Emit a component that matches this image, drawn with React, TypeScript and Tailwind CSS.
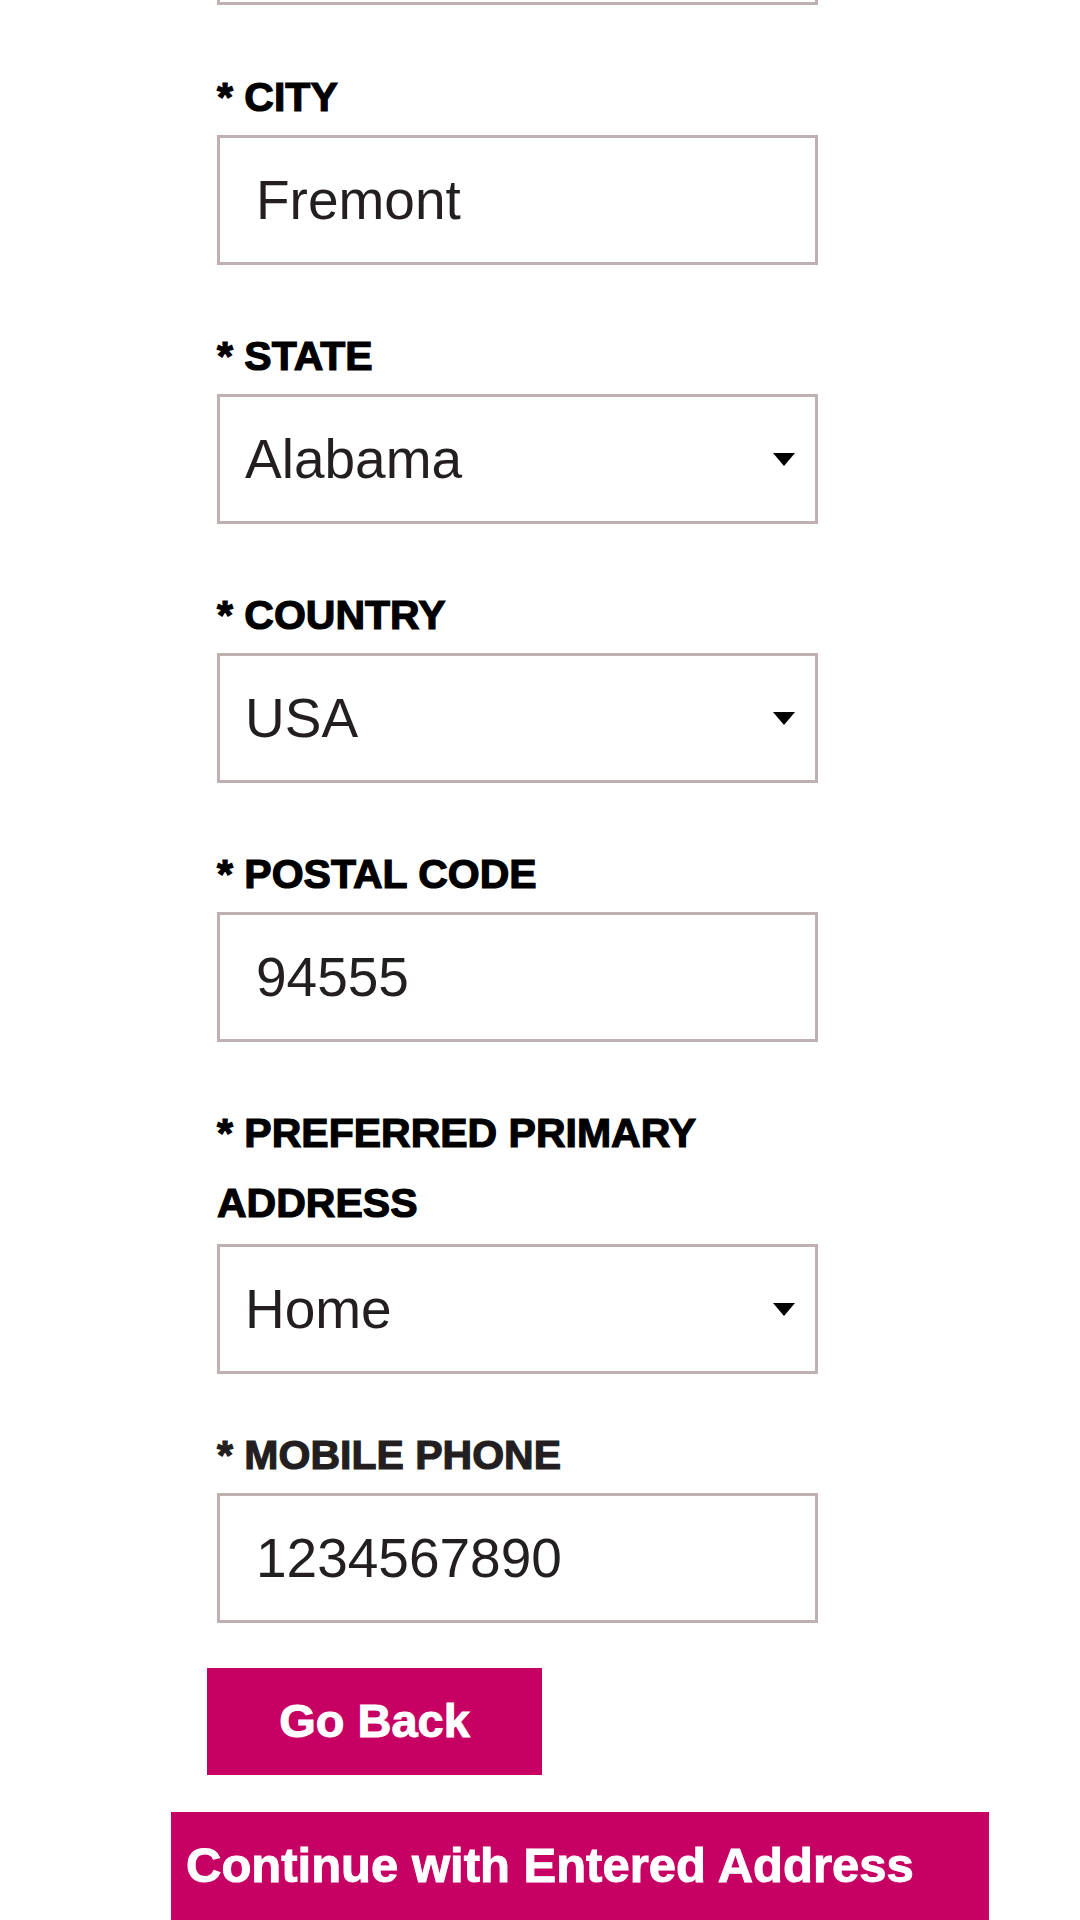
import React from "react";

type Field = {
  label: string[];
  value: string;
  select?: boolean;
};

const fields: Field[] = [
  { label: ["* CITY"], value: "Fremont" },
  { label: ["* STATE"], value: "Alabama", select: true },
  { label: ["* COUNTRY"], value: "USA", select: true },
  { label: ["* POSTAL CODE"], value: "94555" },
  { label: ["* PREFERRED PRIMARY", "ADDRESS"], value: "Home", select: true },
];

function Caret() {
  return (
    <svg width="22" height="13" viewBox="0 0 22 13" className="shrink-0">
      <path d="M0 0 H22 L11 13 Z" fill="#000" />
    </svg>
  );
}

function FieldBox({ value, select }: { value: string; select?: boolean }) {
  return (
    <div
      className={`flex h-[130px] w-[601px] items-center border-[3px] border-[#bfb1b1] bg-white ${
        select ? "justify-between pl-[25px] pr-[20px]" : "pl-[36px]"
      }`}
    >
      <span className="text-[55px] leading-none text-[#231f20]">{value}</span>
      {select && <Caret />}
    </div>
  );
}

function FormField({ field, first }: { field: Field; first: boolean }) {
  const twoLine = field.label.length > 1;
  return (
    <div className={first ? "mt-[57px]" : "mt-[56px]"}>
      <div
        className={`${twoLine ? "mb-[6px]" : "mb-[3px]"} text-[41px] font-bold leading-[70px] text-black [-webkit-text-stroke:1.2px_#000]`}
      >
        {field.label.map((line) => (
          <div key={line}>{line}</div>
        ))}
      </div>
      <FieldBox value={field.value} select={field.select} />
    </div>
  );
}

export default function App() {
  return (
    <div
      className="min-h-screen w-full overflow-hidden bg-white"
      style={{ fontFamily: '"Liberation Sans", Arial, sans-serif' }}
    >
      <div className="flex w-[818px] flex-col pl-[217px]">
        {/* tail of the previous field, scrolled off the top */}
        <div className="h-[5px] w-[601px] border-x-[3px] border-b-[3px] border-[#bfb1b1]" />

        {fields.map((f, i) => (
          <FormField key={f.label.join(" ")} field={f} first={i === 0} />
        ))}

        <div className="mt-[46px]">
          <div className="mb-[3px] text-[41px] font-bold leading-[70px] text-[#231f20] [-webkit-text-stroke:1.2px_#231f20]">
            * MOBILE PHONE
          </div>
          <FieldBox value="1234567890" />
        </div>

        <button className="ml-[-10px] mt-[45px] flex h-[107px] w-[335px] items-center justify-center bg-[#c70063] text-[47px] font-bold text-white [-webkit-text-stroke:1px_#fff]">
          Go Back
        </button>

        <button className="ml-[-46px] mt-[37px] flex h-[120px] w-[818px] items-start bg-[#c70063] pl-[15px] pt-[29px] text-left text-[49px] font-bold leading-none text-white [-webkit-text-stroke:1px_#fff]">
          Continue with Entered Address
        </button>
      </div>
    </div>
  );
}
